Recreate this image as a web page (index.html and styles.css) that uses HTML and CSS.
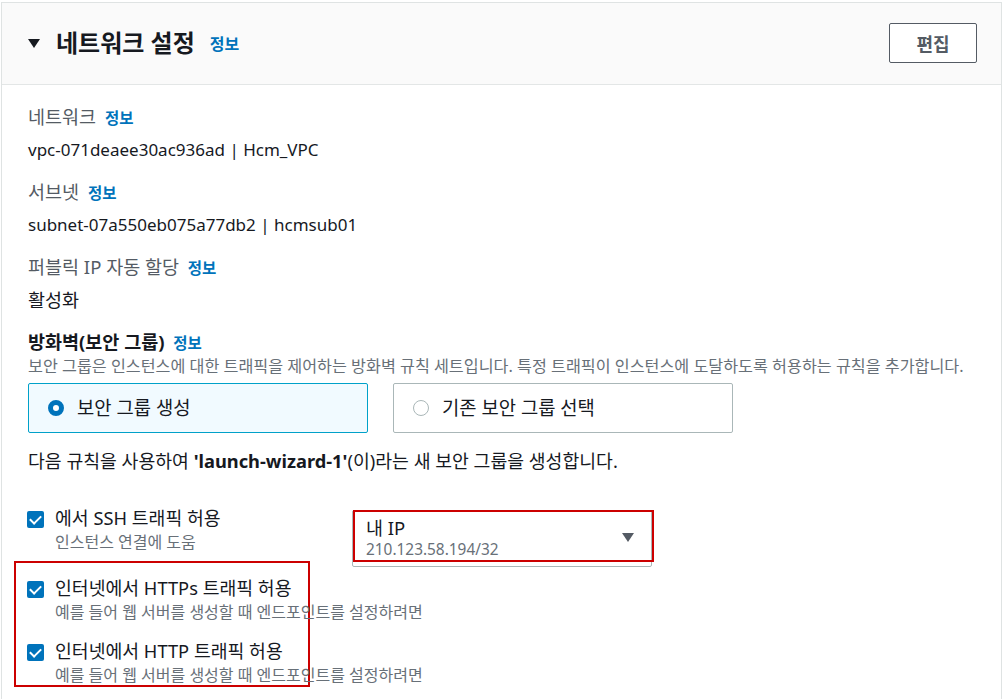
FILE: index.html
```html
<!DOCTYPE html>
<html lang="ko">
<head>
    <meta charset="UTF-8">
    <meta name="viewport" content="width=device-width, initial-scale=1.0">
    <title>네트워크 설정</title>
    <link rel="stylesheet" href="styles.css">
</head>
<body>
    <section class="panel">
        <header class="panel-header">
            <div class="panel-title">
                <span class="caret"></span>
                <h2>네트워크 설정</h2>
                <a class="info" href="#">정보</a>
            </div>
            <button class="btn" type="button">편집</button>
        </header>

        <div class="panel-body">
            <div class="field">
                <div class="label">네트워크 <a class="info" href="#">정보</a></div>
                <div class="value latin">vpc-071deaee30ac936ad | Hcm_VPC</div>
            </div>
            <div class="field">
                <div class="label">서브넷 <a class="info" href="#">정보</a></div>
                <div class="value latin">subnet-07a550eb075a77db2 | hcmsub01</div>
            </div>
            <div class="field">
                <div class="label">퍼블릭 IP 자동 할당 <a class="info" href="#">정보</a></div>
                <div class="value">활성화</div>
            </div>

            <div class="firewall">
                <div class="label strong">방화벽(보안 그룹) <a class="info" href="#">정보</a></div>
                <div class="desc">보안 그룹은 인스턴스에 대한 트래픽을 제어하는 방화벽 규칙 세트입니다. 특정 트래픽이 인스턴스에 도달하도록 허용하는 규칙을 추가합니다.</div>
                <div class="tiles">
                    <label class="tile selected">
                        <span class="radio checked"></span>
                        보안 그룹 생성
                    </label>
                    <label class="tile">
                        <span class="radio"></span>
                        기존 보안 그룹 선택
                    </label>
                </div>
                <p class="note">다음 규칙을 사용하여 <b>'launch-wizard-1'</b>(이)라는 새 보안 그룹을 생성합니다.</p>
            </div>

            <div class="rule-row">
                <div class="check-item">
                    <span class="checkbox"></span>
                    <div>
                        <div class="check-label">에서 SSH 트래픽 허용</div>
                        <div class="check-desc">인스턴스 연결에 도움</div>
                    </div>
                </div>
                <div class="select">
                    <div>
                        <div class="select-value">내 IP</div>
                        <div class="select-sub">210.123.58.194/32</div>
                    </div>
                    <span class="select-caret"></span>
                    <span class="mark"></span>
                </div>
            </div>

            <div class="highlight">
                <div class="check-item">
                    <span class="checkbox"></span>
                    <div>
                        <div class="check-label">인터넷에서 HTTPs 트래픽 허용</div>
                        <div class="check-desc">예를 들어 웹 서버를 생성할 때 엔드포인트를 설정하려면</div>
                    </div>
                </div>
                <div class="check-item">
                    <span class="checkbox"></span>
                    <div>
                        <div class="check-label">인터넷에서 HTTP 트래픽 허용</div>
                        <div class="check-desc">예를 들어 웹 서버를 생성할 때 엔드포인트를 설정하려면</div>
                    </div>
                </div>
            </div>
        </div>
    </section>
</body>
</html>
```

FILE: styles.css
```css
body {
    margin: 2px 0 0 1px;
    font-family: "Noto Sans", "Noto Sans CJK KR", sans-serif;
    color: #16191f;
    background: #fff;
}
.panel {
    border: 1px solid #dfe3e3;
    border-bottom: none;
    height: 720px;
    margin-right: 1px;
}
.panel-header {
    display: flex;
    align-items: center;
    justify-content: space-between;
    box-sizing: border-box;
    height: 82px;
    padding: 0 24px 2px 26px;
    background: #fafafa;
    border-bottom: 1px solid #e3e6e6;
}
.panel-title {
    display: flex;
    align-items: center;
}
.caret {
    width: 0;
    height: 0;
    border-left: 6px solid transparent;
    border-right: 6px solid transparent;
    border-top: 9px solid #16191f;
    margin-right: 16px;
    margin-top: 2px;
}
.panel-title h2 {
    margin: 0 15px 0 0;
    font-size: 24px;
    font-weight: 700;
    line-height: 30px;
}
.panel-title .info {
    font-size: 16px;
    margin-left: 0;
}
.info {
    color: #0073bb;
    font-size: 15.5px;
    font-weight: 700;
    text-decoration: none;
    margin-left: 4px;
}
.btn {
    width: 88px;
    height: 40px;
    border: 1px solid #545b64;
    border-radius: 2px;
    background: #fff;
    color: #545b64;
    font-family: inherit;
    font-size: 18px;
    font-weight: 700;
}
.panel-body {
    padding: 21px 26px 0 26px;
}
.field {
    margin-bottom: 20px;
}
.label {
    font-size: 18.5px;
    line-height: 22px;
    color: #545b64;
}
.label.strong {
    color: #16191f;
    font-weight: 700;
}
.value {
    font-size: 18.5px;
    line-height: 22px;
    margin-top: 10px;
}
.value.latin {
    font-size: 17px;
}
.firewall {
    margin-top: 2px;
}
.desc {
    font-size: 16.2px;
    line-height: 20px;
    color: #687078;
    margin-top: 2px;
    white-space: nowrap;
}
.tiles {
    display: flex;
    gap: 25px;
    margin-top: 7px;
}
.tile {
    display: flex;
    align-items: center;
    box-sizing: border-box;
    width: 340px;
    height: 50px;
    padding: 0 0 2px 19px;
    border: 1px solid #aab7b8;
    border-radius: 2px;
    font-size: 18.8px;
}
.tile.selected {
    background: #f1faff;
    border-color: #00a1c9;
}
.radio {
    box-sizing: border-box;
    width: 16px;
    height: 16px;
    border: 1px solid #aab7b8;
    border-radius: 50%;
    margin: 2px 13px 0 0;
    background: #fff;
}
.radio.checked {
    border: 5px solid #0073bb;
}
.note {
    margin: 16px 0 0;
    font-size: 18.3px;
    line-height: 24px;
}
.rule-row {
    display: flex;
    align-items: flex-start;
    margin-top: 34px;
}
.check-item {
    display: flex;
    align-items: flex-start;
}
.rule-row .check-item {
    width: 324px;
}
.checkbox {
    position: relative;
    flex: none;
    width: 17px;
    height: 17px;
    border-radius: 2px;
    background: #0073bb;
    margin: 4px 11px 0 -1px;
}
.checkbox::after {
    content: "";
    position: absolute;
    left: 5px;
    top: 2px;
    width: 5px;
    height: 9px;
    border: solid #fff;
    border-width: 0 2px 2px 0;
    transform: rotate(45deg);
}
.check-label {
    font-size: 18.3px;
    line-height: 22px;
}
.check-desc {
    font-size: 16px;
    line-height: 20px;
    color: #687078;
    margin-top: 3px;
    white-space: nowrap;
}
.select {
    position: relative;
    display: flex;
    align-items: center;
    justify-content: space-between;
    box-sizing: border-box;
    width: 300px;
    height: 57px;
    margin: 3px 0 -15px;
    padding: 0 17px 0 13px;
    border: 1px solid #aab7b8;
    border-radius: 2px;
}
.select-value {
    font-size: 18.5px;
    line-height: 22px;
}
.select-sub {
    font-size: 15.4px;
    line-height: 21px;
    color: #687078;
}
.select-caret {
    width: 0;
    height: 0;
    border-left: 6px solid transparent;
    border-right: 6px solid transparent;
    border-top: 9px solid #545b64;
    margin-top: -2px;
}
.mark {
    position: absolute;
    left: 0;
    top: -1px;
    width: 297px;
    height: 48px;
    border: 2px solid #c00;
}
.highlight {
    width: 281px;
    margin: 9px 0 0 -14px;
    padding: 14px 0 0 11px;
    border: 2px solid #c00;
}
.highlight .checkbox {
    margin-left: 0;
}
.highlight .check-item + .check-item {
    margin-top: 18px;
}
```
